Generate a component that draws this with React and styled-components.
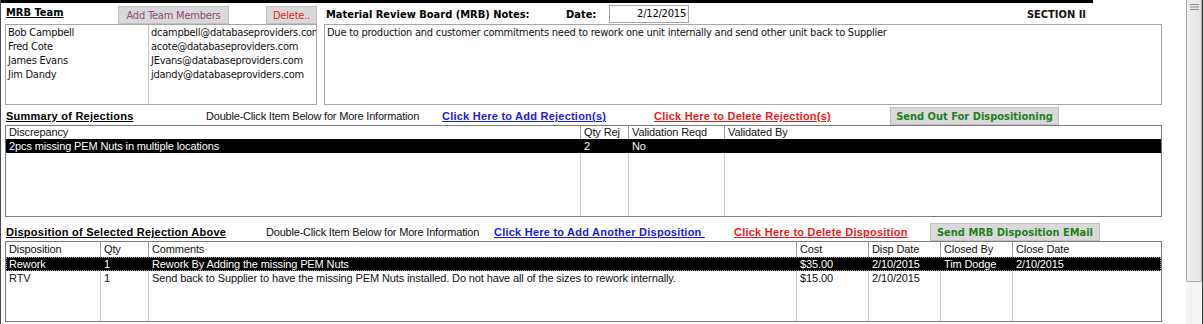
import React from 'react';
import styled, { createGlobalStyle } from 'styled-components';

const ui = `"DejaVu Sans Condensed", "DejaVu Sans", Verdana, sans-serif`;
const arial = `"Liberation Sans", Arial, sans-serif`;

const GlobalStyle = createGlobalStyle`
  html, body {
    margin: 0;
    padding: 0;
    background: #fff;
  }
  body {
    width: 1203px;
    height: 324px;
    overflow: hidden;
  }
`;

const Screen = styled.div`
  display: flex;
  width: 1203px;
  height: 324px;
  box-sizing: border-box;
  border-left: 1px solid #4a4a4a;
  background: #fff;
`;

const Main = styled.div`
  width: 1161px;
  display: flex;
  flex-direction: column;
`;

const TopBar = styled.div`
  width: 1092px;
  height: 3px;
  background: #000;
`;

const Form = styled.div`
  padding-left: 4px;
  width: 1157px;
  display: flex;
  flex-direction: column;
`;

const TopSection = styled.div`
  display: grid;
  grid-template-columns: 312px 838px;
  column-gap: 7px;
`;

const Column = styled.div`
  display: flex;
  flex-direction: column;
`;

const TeamHeader = styled.div`
  height: 21px;
  display: grid;
  grid-template-columns: 113px 111px 1fr 51px;
  align-items: end;
`;

const Title = styled.div`
  align-self: start;
  padding: ${p => p.$pad || '3px 0 0 1px'};
  font-family: ${p => (p.$arial ? arial : ui)};
  font-size: 11px;
  font-weight: bold;
  line-height: 13px;
  letter-spacing: ${p => (p.$arial ? '0.25px' : '0')};
  color: #000;
  text-decoration: underline;
  white-space: nowrap;
`;

const Button = styled.div`
  height: 18px;
  box-sizing: border-box;
  display: flex;
  align-items: center;
  justify-content: center;
  background: #d9d9d9;
  border: 1px solid #c0c0c0;
  font-family: ${ui};
  font-size: 11px;
  font-weight: ${p => (p.$bold ? 'bold' : 'normal')};
  letter-spacing: ${p => (p.$bold ? '0' : '-0.2px')};
  color: ${p => p.$color};
  white-space: nowrap;
`;

const Box = styled.div`
  height: 81px;
  box-sizing: border-box;
  border: 1px solid #a6a6a6;
  background: #fff;
  font-family: ${ui};
  font-size: 11px;
  line-height: 14px;
  letter-spacing: -0.25px;
  color: #111;
`;

const TeamList = styled(Box)`
  display: grid;
  grid-template-columns: 143px 1fr;
`;

const TeamCol = styled.div`
  padding: 1px 0 0 ${p => p.$pad}px;
  border-right: ${p => (p.$divider ? '1px solid #c4c4c4' : 'none')};
  overflow: hidden;
  white-space: nowrap;
`;

const Notes = styled(Box)`
  padding: 1px 0 0 2px;
`;

const NotesHeader = styled.div`
  height: 21px;
  display: flex;
  align-items: flex-start;
  font-family: ${ui};
  font-size: 11px;
  font-weight: bold;
  color: #000;
`;

const HeadLabel = styled.div`
  width: ${p => p.$w}px;
  padding: 5px 0 0 ${p => p.$pad || 0}px;
  box-sizing: border-box;
  line-height: 13px;
  white-space: nowrap;
`;

const DateBox = styled.div`
  width: 80px;
  height: 18px;
  margin-top: 2px;
  box-sizing: border-box;
  border: 1px solid #a6a6a6;
  padding-right: 2px;
  font-weight: normal;
  letter-spacing: -0.2px;
  line-height: 15px;
  text-align: right;
`;

const SectionLabel = styled.div`
  margin-left: auto;
  margin-right: 76px;
  padding-top: 5px;
  line-height: 13px;
  color: #1a1010;
`;

const ActionBar = styled.div`
  height: ${p => p.$h}px;
  display: grid;
  grid-template-columns: ${p => p.$cols};
  align-items: end;
  font-family: ${arial};
  font-size: 11px;
`;

const Hint = styled.div`
  align-self: start;
  padding-top: ${p => p.$top}px;
  line-height: 13px;
  letter-spacing: -0.2px;
  color: #111;
  white-space: nowrap;
`;

const Link = styled.div`
  align-self: start;
  padding-top: ${p => p.$top}px;
  line-height: 13px;
  font-weight: bold;
  letter-spacing: 0.23px;
  text-decoration: underline;
  color: ${p => p.$color};
  white-space: pre;
`;

const Table = styled.div`
  height: ${p => p.$h}px;
  box-sizing: border-box;
  border: 1px solid #7c7c7c;
  display: flex;
  flex-direction: column;
  font-family: ${arial};
  font-size: 11px;
  letter-spacing: -0.12px;
  color: #111;
`;

const Row = styled.div`
  display: grid;
  grid-template-columns: ${p => p.$cols};
  height: ${p => p.$h || 14}px;
  box-sizing: border-box;
  background: ${p => (p.$selected ? '#000' : '#fff')};
  color: ${p => (p.$selected ? '#fff' : '#111')};
  outline: ${p => (p.$focus ? '1px dotted #9a9a9a' : 'none')};
  outline-offset: -1px;
`;

const Filler = styled(Row)`
  flex: 1;
  height: auto;
`;

const Cell = styled.div`
  padding-left: 3px;
  line-height: ${p => p.$lh || 14}px;
  white-space: nowrap;
  overflow: hidden;
  border-right: 1px solid ${p => (p.$head ? '#a0a0a0' : p.$selected ? '#000' : '#c8c8c8')};
  &:last-child {
    border-right: none;
  }
`;

const Scrollbar = styled.div`
  width: 16px;
  margin-left: 24px;
  display: flex;
  flex-direction: column;
  background: #f4f4f4;
  border-right: 1px solid #3c3c3c;
`;

const Thumb = styled.div`
  height: 282px;
  box-sizing: border-box;
  border: 1px solid #a9a9a9;
  border-top: none;
  border-radius: 0 0 2px 2px;
  background: linear-gradient(to right, #f0f0f2, #e4e4e8);
  display: flex;
  justify-content: center;
  padding-top: 4px;
`;

const GripIcon = () => (
  <svg width="9" height="7" viewBox="0 0 9 7">
    <path d="M0 0.5h9M0 3h9M0 5.5h9" stroke="#8a8a8a" strokeWidth="1" />
  </svg>
);

const team = [
  ['Bob Campbell', 'dcampbell@databaseproviders.com'],
  ['Fred Cote', 'acote@databaseproviders.com'],
  ['James Evans', 'JEvans@databaseproviders.com'],
  ['Jim Dandy', 'jdandy@databaseproviders.com'],
];

const rejectCols = '575px 48px 96px 1fr';
const rejectHead = ['Discrepancy', 'Qty Rej', 'Validation Reqd', 'Validated By'];
const rejections = [
  { cells: ['2pcs missing PEM Nuts in multiple locations', '2', 'No', ''], selected: true },
];

const dispCols = '95px 48px 648px 72px 72px 72px 1fr';
const dispHead = ['Disposition', 'Qty', 'Comments', 'Cost', 'Disp Date', 'Closed By', 'Close Date'];
const dispositions = [
  {
    cells: ['Rework', '1', 'Rework By Adding the missing PEM Nuts', '$35.00', '2/10/2015', 'Tim Dodge', '2/10/2015'],
    selected: true,
  },
  {
    cells: [
      'RTV',
      '1',
      'Send back to Supplier to have the missing PEM Nuts installed. Do not have all of the sizes to rework internally.',
      '$15.00',
      '2/10/2015',
      '',
      '',
    ],
  },
];

function GridTable({ cols, head, rows, height, headH, focus }) {
  return (
    <Table $h={height}>
      <Row $cols={cols} $h={headH}>
        {head.map(h => (
          <Cell key={h} $head $lh={headH}>{h}</Cell>
        ))}
      </Row>
      {rows.map((r, i) => (
        <Row key={i} $cols={cols} $selected={r.selected} $focus={focus && r.selected}>
          {r.cells.map((c, j) => (
            <Cell key={j} $selected={r.selected}>{c}</Cell>
          ))}
        </Row>
      ))}
      <Filler $cols={cols}>
        {head.map(h => (
          <Cell key={h} />
        ))}
      </Filler>
    </Table>
  );
}

export default function App() {
  return (
    <>
      <GlobalStyle />
      <Screen>
        <Main>
          <TopBar />
          <Form>
            <TopSection>
              <Column>
                <TeamHeader>
                  <Title>MRB Team</Title>
                  <Button $color="#8e4a78">Add Team Members</Button>
                  <span />
                  <Button $color="#e01c1c">Delete..</Button>
                </TeamHeader>
                <TeamList>
                  <TeamCol $pad={2} $divider>
                    {team.map(t => (
                      <div key={t[0]}>{t[0]}</div>
                    ))}
                  </TeamCol>
                  <TeamCol $pad={2}>
                    {team.map(t => (
                      <div key={t[1]}>{t[1]}</div>
                    ))}
                  </TeamCol>
                </TeamList>
              </Column>
              <Column>
                <NotesHeader>
                  <HeadLabel $w={242} $pad={2}>Material Review Board (MRB) Notes:</HeadLabel>
                  <HeadLabel $w={43}>Date:</HeadLabel>
                  <DateBox>2/12/2015</DateBox>
                  <SectionLabel>SECTION II</SectionLabel>
                </NotesHeader>
                <Notes>
                  Due to production and customer commitments need to rework one unit internally and send other unit back to Supplier
                </Notes>
              </Column>
            </TopSection>

            <ActionBar $h={20} $cols="201px 236px 212px 236px 169px">
              <Title $arial $pad="5px 0 0 1px">Summary of Rejections</Title>
              <Hint $top={5}>Double-Click Item Below for More Information</Hint>
              <Link $top={5} $color="#1c1cd8">Click Here to Add Rejection(s)</Link>
              <Link $top={5} $color="#ec1c1c">Click Here to Delete Rejection(s)</Link>
              <Button $bold $color="#1f7f1f">Send Out For Dispositioning</Button>
            </ActionBar>
            <GridTable cols={rejectCols} head={rejectHead} rows={rejections} height={92} headH={13} />

            <ActionBar $h={24} $cols="261px 228px 240px 196px 170px">
              <Title $arial $pad="9px 0 0 1px">Disposition of Selected Rejection Above</Title>
              <Hint $top={9}>Double-Click Item Below for More Information</Hint>
              <Link $top={9} $color="#1c1cd8">{'Click Here to Add Another Disposition '}</Link>
              <Link $top={9} $color="#ec1c1c">Click Here to Delete Disposition</Link>
              <Button $bold $color="#1f7f1f">Send MRB Disposition EMail</Button>
            </ActionBar>
            <GridTable cols={dispCols} head={dispHead} rows={dispositions} height={81} headH={15} focus />
          </Form>
        </Main>
        <Scrollbar>
          <Thumb>
            <GripIcon />
          </Thumb>
        </Scrollbar>
      </Screen>
    </>
  );
}
